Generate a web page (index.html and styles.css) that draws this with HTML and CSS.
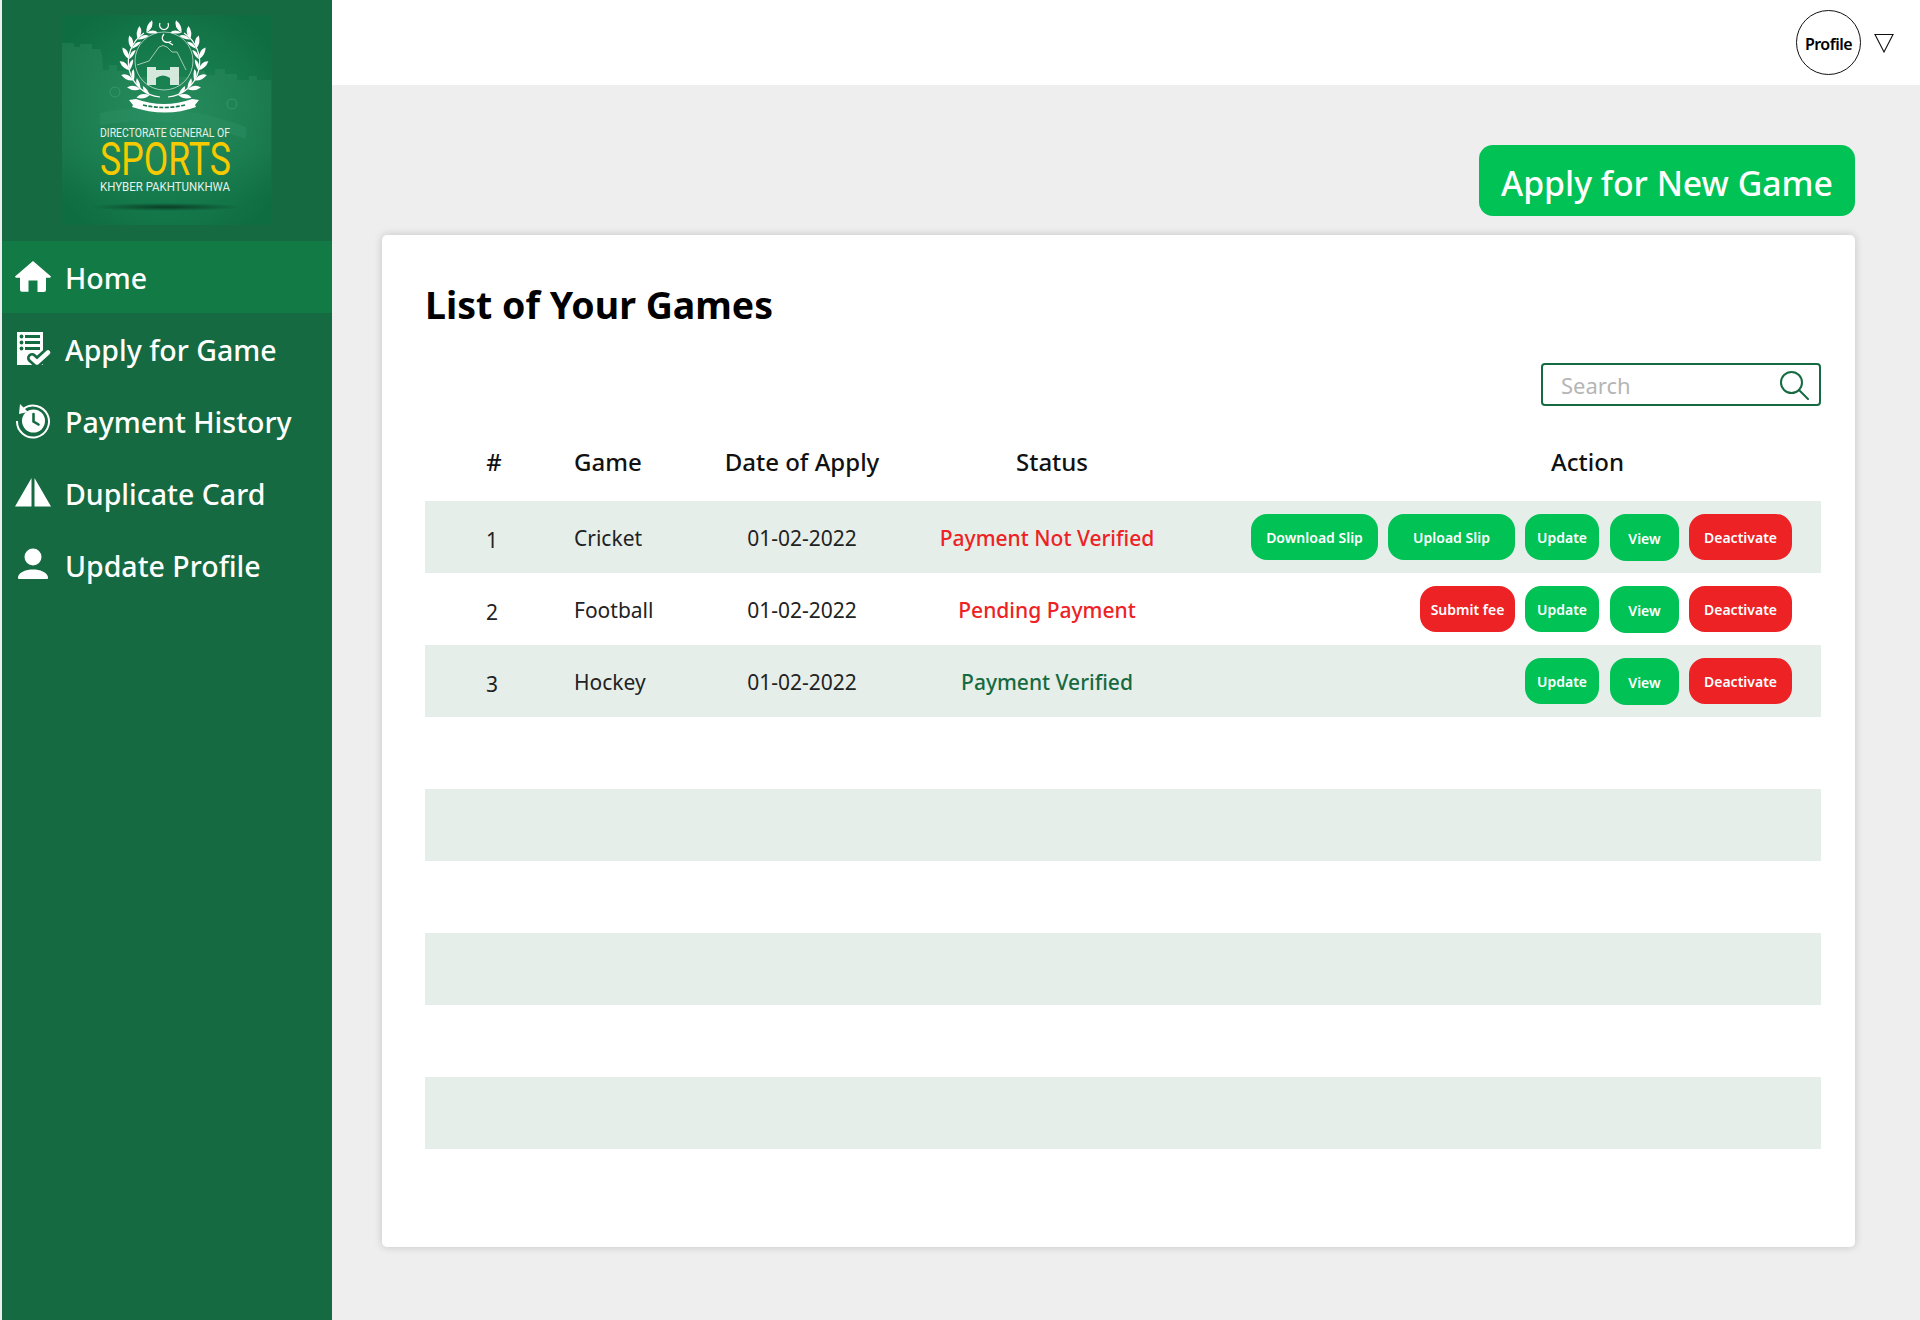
FILE: index.html
```html
<!DOCTYPE html>
<html>
<head>
    <meta charset="UTF-8" />
    <title>Directorate General of Sports KP - My Games</title>
    <link rel="stylesheet" href="styles.css">
</head>
<body>
    <div id="sidebar">
        <div class="logo-wrap">
            <svg class="logo" viewBox="0 0 210 210" role="img" aria-label="Directorate General of Sports Khyber Pakhtunkhwa">
                <defs>
                    <radialGradient id="logoBg" cx="50%" cy="52%" r="62%">
                        <stop offset="0" stop-color="#1f8a58" />
                        <stop offset="0.65" stop-color="#14784a" />
                        <stop offset="1" stop-color="#0f6d42" />
                    </radialGradient>
                    <linearGradient id="wallFade" x1="0" y1="0" x2="0" y2="1">
                        <stop offset="0" stop-color="#5cae86" stop-opacity="0.17" />
                        <stop offset="0.7" stop-color="#5cae86" stop-opacity="0.1" />
                        <stop offset="1" stop-color="#5cae86" stop-opacity="0" />
                    </linearGradient>
                    <radialGradient id="logoShadow">
                        <stop offset="0" stop-color="#0a3d25" />
                        <stop offset="1" stop-color="#0a3d25" stop-opacity="0" />
                    </radialGradient>
                    <g id="leaves" fill="#fff">
                        <path d="M0 0q3-7 11-8q-1 7-11 8z" />
                        <path d="M0 0q5 5 10 5.500q-2-6-10-5.500z" />
                    </g>
                    <g id="wreath">
                        <path fill="none" stroke="#fff" stroke-width="1.200" d="M82 18A35 35 0 0 0 98 82" />
                        <use href="#leaves" transform="rotate(-30 102 48) translate(102 13)" />
                        <use href="#leaves" transform="rotate(-48 102 48) translate(102 13)" />
                        <use href="#leaves" transform="rotate(-66 102 48) translate(102 13)" />
                        <use href="#leaves" transform="rotate(-84 102 48) translate(102 13)" />
                        <use href="#leaves" transform="rotate(-102 102 48) translate(102 13)" />
                        <use href="#leaves" transform="rotate(-120 102 48) translate(102 13)" />
                        <use href="#leaves" transform="rotate(-138 102 48) translate(102 13)" />
                        <use href="#leaves" transform="rotate(-156 102 48) translate(102 13)" />
                    </g>
                </defs>
                <rect width="210" height="210" fill="url(#logoBg)" />
                <!-- fort wall behind the emblem -->
                <path fill="url(#wallFade)" d="M0 28h12v4h6v-3h12v5h8l2 6 1 15h6v-5h8v6h16v6h16v14h30v-14h18v-6h8v4h10v-6h10v5h12v6h12v-4h8v4h14v115H0z" />
                <path fill="#2c9166" opacity="0.45" d="M38 98q70-14 146 14v12q-74-26-146-14z" />
                <circle cx="53" cy="77" r="5" fill="none" stroke="#5cae86" stroke-opacity="0.4" />
                <circle cx="170" cy="89" r="5" fill="none" stroke="#5cae86" stroke-opacity="0.4" />
                <!-- emblem -->
                <g fill="none" stroke="#fff">
                    <circle cx="102" cy="46" r="29" stroke-width="0.7" opacity="0.85" />
                    <path stroke-width="0.7" opacity="0.85" d="M75 50l12-4 10-14q4-3 8 0l5 5 5 0 9 18" />
                    <path stroke-width="1.300" d="M98 8a4.500 4.500 0 1 0 8 0" />
                    <path stroke-width="1.300" d="M102 19q-4 5 1 8 5 1 6-1M106 27l5 3" />
                </g>
                <path fill="#d5e8dc" d="M85 52h9v3h14v-3h9v18h-9v-7q-7-5-14 0v7h-9z" />
                <use href="#wreath" />
                <use href="#wreath" transform="matrix(-1 0 0 1 204 0)" />
                <path fill="#fff" d="M67 85l7-1q28 10 56 0l7 1-4 5 1 2q-30 11-64 0l1-2z" />
                <path fill="none" stroke="#14784a" stroke-width="1.600" stroke-dasharray="4 1.500" d="M81 90q21 5 42 0" />
                <!-- wordmark -->
                <text class="logo-small" x="38" y="122" textLength="130" lengthAdjust="spacingAndGlyphs">DIRECTORATE GENERAL OF</text>
                <text class="logo-sports" x="38" y="160" textLength="131" lengthAdjust="spacingAndGlyphs">SPORTS</text>
                <text class="logo-small" x="38" y="176" textLength="130" lengthAdjust="spacingAndGlyphs">KHYBER PAKHTUNKHWA</text>
                <ellipse cx="104" cy="192" rx="76" ry="4" fill="url(#logoShadow)" />
            </svg>
        </div>
        <nav class="menu">
            <a class="menu-item active">
                <svg class="menu-icon" viewBox="0 0 36 36"><path fill="#fff" d="M18 2L0 17.500l.8 1.200H5v12q0 2 2 2h6.500V21.500h9v11.500H29q2 0 2-2V18.700h4.200l.8-1.200z" /></svg>
                <span class="menu-label">Home</span>
            </a>
            <a class="menu-item">
                <svg class="menu-icon" viewBox="0 0 36 36">
                    <path fill="#fff" d="M2 1h26v33H2z" />
                    <path fill="none" stroke="#156a41" stroke-width="3" d="M10 5.500h15M10 11.500h15M10 17.500h15" />
                    <circle cx="6.500" cy="5.500" r="1.900" fill="#156a41" />
                    <circle cx="6.500" cy="11.500" r="1.900" fill="#156a41" />
                    <circle cx="6.500" cy="17.500" r="1.900" fill="#156a41" />
                    <path fill="none" stroke="#156a41" stroke-width="10" stroke-linecap="round" stroke-linejoin="round" d="M17 27l5 4.500 11-10" />
                    <path fill="none" stroke="#fff" stroke-width="4.500" stroke-linecap="round" stroke-linejoin="round" d="M17 27l5 4.500 11-10" />
                </svg>
                <span class="menu-label">Apply for Game</span>
            </a>
            <a class="menu-item">
                <svg class="menu-icon" viewBox="0 0 36 36"><circle cx="18.500" cy="18" r="11.500" fill="#fff" /><path fill="none" stroke="#fff" stroke-width="2" d="M2 18A16 16 0 1 0 8 6" /><path fill="#fff" d="M5 1l8 8-9 2z" /><path fill="none" stroke="#156a41" stroke-width="2.600" stroke-linecap="round" d="M18.500 11v7.500l5 3" /></svg>
                <span class="menu-label">Payment History</span>
            </a>
            <a class="menu-item">
                <svg class="menu-icon" viewBox="0 0 36 36"><path fill="#fff" d="M16.500 3v28.500H0zM19.500 3L36 31.500H19.500z" /></svg>
                <span class="menu-label">Duplicate Card</span>
            </a>
            <a class="menu-item">
                <svg class="menu-icon" viewBox="0 0 36 36"><circle cx="18" cy="10" r="8.500" fill="#fff" /><path fill="#fff" d="M4 32q-1.500 0-1-2c1-5 8-7.500 15-7.500s14 2.500 15 7.500q.5 2-1 2z" /></svg>
                <span class="menu-label">Update Profile</span>
            </a>
        </nav>
    </div>

    <div id="main">
        <div id="topbar">
            <div class="profile-circle">Profile</div>
            <svg class="caret" viewBox="0 0 20 20"><path fill="none" stroke="#111" stroke-width="1.100" d="M1 1.500h18L10 19z" /></svg>
        </div>

        <div id="content">
            <div class="page-actions">
                <button class="apply-btn">Apply for New Game</button>
            </div>

            <div class="card">
                <h1 class="card-title">List of Your Games</h1>
                <div class="search-row">
                    <div class="search-box">
                        <span class="search-text">Search</span>
                        <svg class="search-icon" viewBox="0 0 30 30"><circle cx="12.500" cy="12.500" r="10.500" fill="none" stroke="#156a41" stroke-width="2" /><path stroke="#156a41" stroke-width="2" stroke-linecap="round" d="M20 20l9 9" /></svg>
                    </div>
                </div>

                <table class="games">
                    <colgroup>
                        <col class="col-num"><col class="col-game"><col class="col-date"><col class="col-status"><col class="col-action">
                    </colgroup>
                    <thead>
                        <tr>
                            <th>#</th>
                            <th class="left">Game</th>
                            <th>Date of Apply</th>
                            <th class="th-status">Status</th>
                            <th class="th-action">Action</th>
                        </tr>
                    </thead>
                    <tbody>
                        <tr>
                            <td class="num">1</td>
                            <td class="left">Cricket</td>
                            <td>01-02-2022</td>
                            <td class="status red">Payment Not Verified</td>
                            <td class="action-cell">
                                <div class="actions">
                                    <button class="btn green wide">Download Slip</button>
                                    <button class="btn green wide">Upload Slip</button>
                                    <button class="btn green update">Update</button>
                                    <button class="btn green view">View</button>
                                    <button class="btn red-bg deactivate">Deactivate</button>
                                </div>
                            </td>
                        </tr>
                        <tr>
                            <td class="num">2</td>
                            <td class="left">Football</td>
                            <td>01-02-2022</td>
                            <td class="status red">Pending Payment</td>
                            <td class="action-cell">
                                <div class="actions">
                                    <button class="btn red-bg submit">Submit fee</button>
                                    <button class="btn green update">Update</button>
                                    <button class="btn green view">View</button>
                                    <button class="btn red-bg deactivate">Deactivate</button>
                                </div>
                            </td>
                        </tr>
                        <tr>
                            <td class="num">3</td>
                            <td class="left">Hockey</td>
                            <td>01-02-2022</td>
                            <td class="status dark-green">Payment Verified</td>
                            <td class="action-cell">
                                <div class="actions">
                                    <button class="btn green update">Update</button>
                                    <button class="btn green view">View</button>
                                    <button class="btn red-bg deactivate">Deactivate</button>
                                </div>
                            </td>
                        </tr>
                        <tr><td colspan="5"></td></tr>
                        <tr><td colspan="5"></td></tr>
                        <tr><td colspan="5"></td></tr>
                        <tr><td colspan="5"></td></tr>
                        <tr><td colspan="5"></td></tr>
                        <tr><td colspan="5"></td></tr>
                    </tbody>
                </table>
            </div>
        </div>
    </div>
</body>
</html>
```

FILE: styles.css
```css
* { box-sizing: border-box; }
html, body { height: 100%; }
body {
    margin: 0;
    display: flex;
    height: 1320px;
    overflow: hidden;
    font-family: "Noto Sans", "Open Sans", sans-serif;
    background: #eeeeee;
    color: #111;
}

/* sidebar */
#sidebar {
    width: 330px;
    flex-shrink: 0;
    margin-left: 2px;
    background: #156a41;
}
.logo-wrap { padding: 15px 0 16px 60px; }
.logo { display: block; width: 210px; height: 210px; }
.logo-small { font-family: "Roboto", sans-serif; font-size: 12.500px; fill: #e6f1ea; }
.logo-sports { font-family: "Roboto", sans-serif; font-size: 46px; fill: #f6c900; }

.menu-item {
    display: flex;
    align-items: center;
    height: 72px;
    padding-left: 13px;
    gap: 14px;
    font-size: 28.500px;
    font-weight: 500;
    color: #fff;
}
.menu-label { padding-top: 2px; }
.menu-item.active { background: #127a45; }
.menu-icon { width: 36px; height: 36px; flex-shrink: 0; }

/* main area */
#main { flex: 1; display: flex; flex-direction: column; min-width: 0; }
#topbar {
    height: 85px;
    flex-shrink: 0;
    background: #fff;
    display: flex;
    align-items: center;
    justify-content: flex-end;
    padding-right: 26px;
}
.profile-circle {
    width: 65px;
    height: 65px;
    border: 1px solid #111;
    border-radius: 50%;
    display: flex;
    align-items: center;
    justify-content: center;
    padding-top: 2px;
    font-size: 16px;
    font-weight: 600;
    letter-spacing: -0.5px;
    color: #000;
}
.caret { width: 20px; height: 20px; margin-left: 13px; }

#content { padding: 60px 65px 0 50px; }
.page-actions { display: flex; justify-content: flex-end; }
.apply-btn {
    width: 376px;
    height: 71px;
    border: 0;
    border-radius: 14px;
    background: #00c255;
    color: #fff;
    font-family: inherit;
    font-size: 33.800px;
    font-weight: 500;
    white-space: nowrap;
    padding: 4px 0 0;
}

.card {
    margin-top: 19px;
    height: 1012px;
    background: #fff;
    border-radius: 5px;
    box-shadow: 0 0 8px rgba(0, 0, 0, 0.18);
    padding: 44px 34px 0 43px;
}
.card-title {
    margin: 0;
    font-size: 37.500px;
    line-height: 52px;
    font-weight: 700;
    color: #000;
}
.search-row { display: flex; justify-content: flex-end; margin-top: 32px; }
.search-box {
    width: 280px;
    height: 43px;
    border: 2px solid #156a41;
    border-radius: 4px;
    display: flex;
    align-items: center;
    justify-content: space-between;
    padding: 0 10px 0 18px;
}
.search-text { font-size: 22px; color: #b5b5b5; }
.search-icon { width: 30px; height: 30px; }

/* table */
.games { width: 100%; border-collapse: collapse; table-layout: fixed; }
.col-num { width: 138px; }
.col-game { width: 137px; }
.col-date { width: 204px; }
.col-status { width: 286px; }
.games th {
    height: 95px;
    font-size: 24px;
    font-weight: 500;
    text-align: center;
    color: #111;
    padding: 16px 0 0;
}
.games td {
    height: 72px;
    padding: 2px 0 0;
    font-size: 21px;
    text-align: center;
    color: #222;
}
.games tbody tr:nth-child(odd) { background: #e6eeea; }
.games .left { text-align: left; padding-left: 11px; }
.games .th-status { padding-left: 10px; }
.games .th-action { padding-left: 164px; }
.games .num { padding: 6px 4px 0 0; }
.games .status { font-weight: 500; }
.games .action-cell { padding: 0; }
.games .red { color: #ed2224; }
.games .dark-green { color: #156a41; }

.actions { display: flex; justify-content: flex-end; gap: 10px; padding-right: 29px; }
.btn {
    height: 46px;
    border: 0;
    border-radius: 16px;
    padding: 2px 0 0;
    color: #fff;
    font-family: inherit;
    font-size: 14px;
    font-weight: 600;
    white-space: nowrap;
}
.green { background: #00c255; }
.red-bg { background: #ed2224; }
.wide { width: 127px; }
.update { width: 74px; }
.view { width: 69px; height: 47px; padding-top: 3px; margin-left: 1px; }
.deactivate { width: 103px; }
.submit { width: 95px; }
```
